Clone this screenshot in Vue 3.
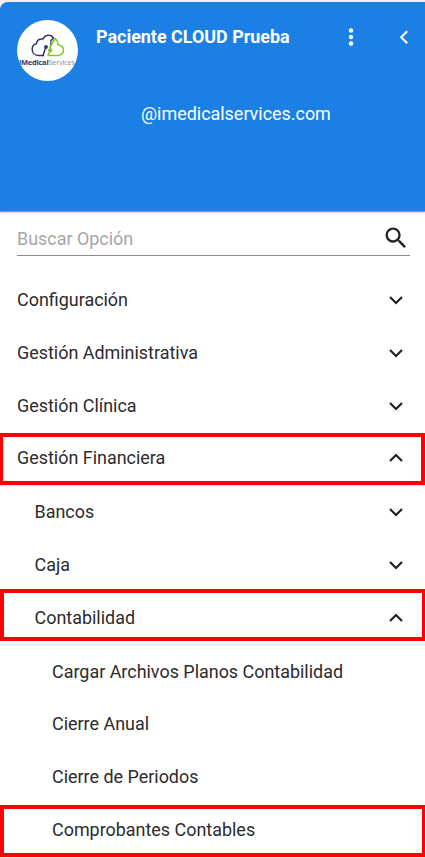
<script setup>
const items = [
  { label: 'Configuración', level: 0, icon: 'down' },
  { label: 'Gestión Administrativa', level: 0, icon: 'down' },
  { label: 'Gestión Clínica', level: 0, icon: 'down' },
  { label: 'Gestión Financiera', level: 0, icon: 'up', mark: 'mark-finance' },
  { label: 'Bancos', level: 1, icon: 'down' },
  { label: 'Caja', level: 1, icon: 'down' },
  { label: 'Contabilidad', level: 1, icon: 'up', mark: 'mark-accounting' },
  { label: 'Cargar Archivos Planos Contabilidad', level: 2, mark: 'first-leaf' },
  { label: 'Cierre Anual', level: 2 },
  { label: 'Cierre de Periodos', level: 2 },
  { label: 'Comprobantes Contables', level: 2, mark: 'mark-vouchers' },
]
</script>

<template>
  <div class="sidebar">
    <header class="header">
      <div class="top">
        <div class="avatar">
          <svg class="cloud" width="34" height="24" viewBox="0 0 34 24" fill="none" stroke-width="1.5" stroke-linecap="round" stroke-linejoin="round">
            <path d="M12.500 21.500H8C4 21.500 1.200 19 1.200 15.500C1.200 12.500 3 10.300 5.500 9.800C5.500 6.500 8.500 4.500 12 5C14 .8 19.500 -.2 22.500 4L20 6.500" stroke="#303668" />
            <path d="M12 21.500L14.500 14" stroke="#303668" />
            <path d="M20 6.500L19.200 14" stroke="#303668" stroke-width="1.100" />
            <circle cx="15" cy="13" r="1.900" fill="#303668" />
            <path d="M19.500 15.500V12L24.200 4.500C26.300 6.300 27 8.500 26.700 10.800C30.500 11.300 32.500 13.300 32.500 16.200C32.500 19.200 30 21.500 27 21.500H17L19 16.500" stroke="#86c62a" />
            <circle cx="19.200" cy="16.300" r="2.100" fill="#86c62a" />
          </svg>
          <div class="brand"><b>iMedical</b><span>Services</span></div>
        </div>
        <div class="name">Paciente CLOUD Prueba</div>
        <svg class="more" width="24" height="24" viewBox="0 0 24 24" fill="#fff">
          <circle cx="12" cy="5.500" r="2.200" /><circle cx="12" cy="12" r="2.200" /><circle cx="12" cy="18.500" r="2.200" />
        </svg>
        <svg class="back" width="24" height="24" viewBox="0 0 24 24" fill="none" stroke="#fff" stroke-width="2.100">
          <path d="M15.200 6.200L9.200 12.200L15.200 18.200" />
        </svg>
      </div>
      <div class="mail">@imedicalservices.com</div>
    </header>
    <div class="search">
      <span>Buscar Opción</span>
      <svg width="28" height="28" viewBox="0 0 24 24" fill="#212121">
        <path d="M15.500 14h-.79l-.28-.27A6.471 6.471 0 0 0 16 9.500 6.500 6.500 0 1 0 9.500 16c1.610 0 3.090-.59 4.230-1.570l.27.28v.79l5 4.990L20.490 19l-4.990-5zm-6 0C7.010 14 5 11.990 5 9.500S7.010 5 9.500 5 14 7.010 14 9.500 11.990 14 9.500 14z" />
      </svg>
    </div>
    <nav class="menu">
      <div v-for="item in items" :key="item.label" class="row" :class="['level-' + item.level, item.mark]">
        <span class="label">{{ item.label }}</span>
        <svg v-if="item.icon" :class="item.icon" width="14" height="10" viewBox="0 0 14 10" fill="none" stroke="#212121" stroke-width="2.200">
          <path :d="item.icon === 'down' ? 'M1 2L7 8L13 2' : 'M1 8L7 2L13 8'" />
        </svg>
      </div>
    </nav>
  </div>
</template>

<style>
body { background: #fff; }
</style>

<style scoped>
.sidebar {
  box-sizing: border-box;
  width: 425px;
  height: 858px;
  padding-top: 2px;
  overflow: hidden;
  background: linear-gradient(#f1f1f1 0 12px, #fff 12px);
  font-family: Roboto, sans-serif;
  font-size: 17.930px;
  color: #2b2b2b;
}
.header {
  box-sizing: border-box;
  height: 209px;
  padding: 18px 9px 0 17px;
  background: #1c7fe4;
  border-top-left-radius: 8px;
  box-shadow: 0 1px 1px #8d8d8d, 0 2px 2px #ddd;
  color: #fff;
}
.top { display: flex; align-items: flex-start; height: 61px; }
.avatar {
  flex: none;
  width: 61px;
  height: 61px;
  border-radius: 50%;
  background: #fff;
  overflow: hidden;
}
.cloud { display: block; margin: 14px 0 0 14px; }
.brand {
  margin: -1px 0 0 2px;
  font: 7.400px/10px "Open Sans", sans-serif;
  letter-spacing: -.2px;
  white-space: nowrap;
  color: #8a8ca0;
}
.brand b { color: #303668; }
.name { width: 243px; padding-left: 18px; line-height: 34px; font-weight: 700; white-space: nowrap; }
.more { flex: none; margin-top: 5px; }
.back { flex: none; margin: 5px 0 0 29px; }
.mail { padding: 21px 0 0 124px; line-height: 24px; }
.search {
  box-sizing: border-box;
  display: flex;
  align-items: center;
  justify-content: space-between;
  height: 35px;
  margin: 10px 15px 0 17px;
  border-bottom: 1px solid #8c8c8c;
  color: #a5a5a5;
}
.menu { padding-top: 18px; }
.row {
  position: relative;
  box-sizing: border-box;
  display: flex;
  align-items: center;
  justify-content: space-between;
  height: 53px;
  padding-right: 22px;
}
.label { margin-bottom: 2px; white-space: nowrap; }
.first-leaf .label { margin-bottom: 0; }
.down { margin-bottom: 2px; }
.level-0 { padding-left: 17px; }
.level-1 { padding-left: 34.500px; }
.level-2 { padding-left: 52px; }
.mark-finance { padding-bottom: 2px; border-bottom: 1px solid #dfe3e6; }
.mark-finance::after, .mark-accounting::after, .mark-vouchers::after {
  content: "";
  position: absolute;
  box-sizing: border-box;
  left: 0;
  right: 0;
  height: 52px;
  border: 4px solid #f00;
}
.mark-finance::after { top: 0; border-left-width: 3px; }
.mark-accounting::after { top: -3px; border-right-width: 3px; }
.mark-accounting { border-bottom: 1px solid #ddd; }
.mark-vouchers::after { top: 1px; border-right-width: 3px; }
</style>
